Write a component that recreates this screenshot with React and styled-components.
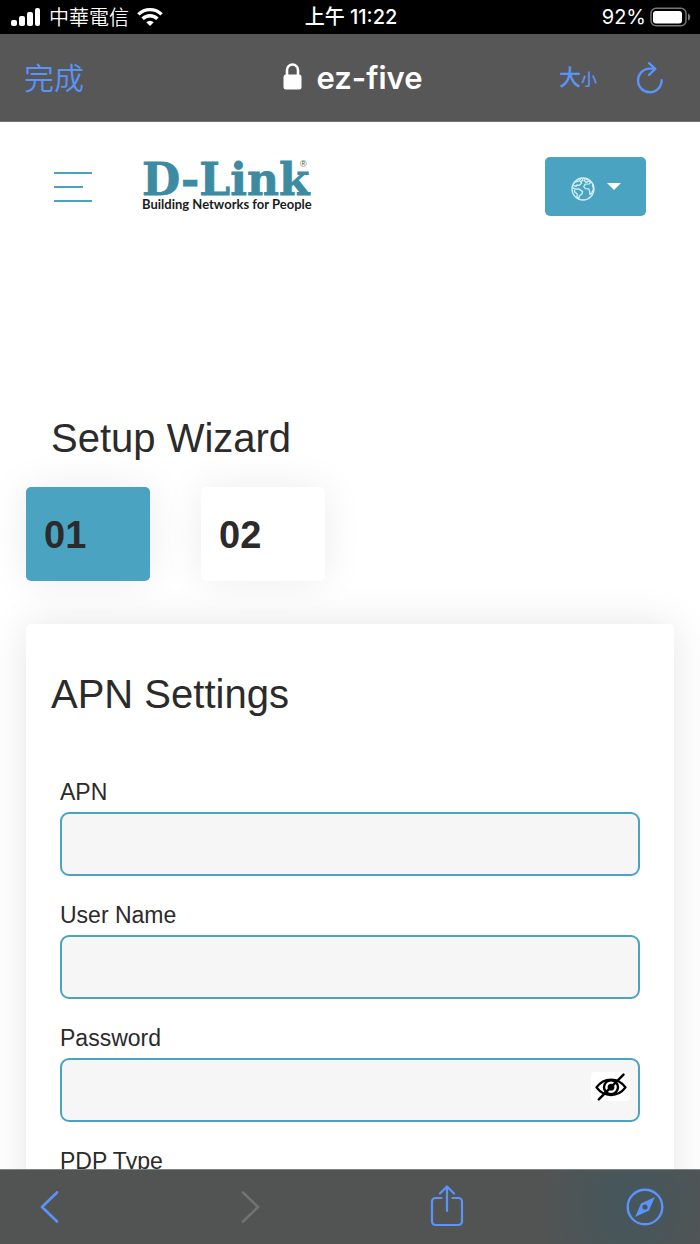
import { useState } from "react";
import styled, { createGlobalStyle, css } from "styled-components";

const teal = "#4aa3c1";
const iosBlue = "#5a93fa";
const ink = "#2b2b2b";

const GlobalStyle = createGlobalStyle`
  * {
    box-sizing: border-box;
  }
  body {
    margin: 0;
    background: #fff;
    color: ${ink};
    font-family: "Liberation Sans", Arial, sans-serif;
  }
  button {
    border: 0;
    padding: 0;
    background: none;
    font: inherit;
    cursor: pointer;
  }
`;

const Screen = styled.div`
  display: flex;
  flex-direction: column;
  height: 100vh;
  overflow: hidden;
`;

const StatusBar = styled.div`
  display: grid;
  grid-template-columns: 1fr auto 1fr;
  align-items: center;
  flex-shrink: 0;
  height: 34px;
  padding: 0 9px 0 11px;
  background: #000;
  color: #fff;
  font: 400 20px/34px Inter, "Noto Sans CJK TC", sans-serif;
`;

const StatusGroup = styled.div`
  display: flex;
  align-items: center;
  gap: ${props => props.gap || "8px"};
  ${props => props.end && css`
    justify-content: flex-end;
  `}
`;

const Carrier = styled.span`
  font-family: "Noto Sans CJK TC", sans-serif;
  font-weight: 350;
`;

const Clock = styled.span`
  font-weight: 500;
`;

const AddressBar = styled.div`
  display: grid;
  grid-template-columns: 1fr auto 1fr;
  align-items: center;
  flex-shrink: 0;
  height: 88px;
  padding: 0 18px 0 24px;
  background: #575757;
  border-bottom: 1px solid #727272;
  font-family: Inter, "Noto Sans CJK TC", sans-serif;
`;

const DoneButton = styled.button`
  justify-self: start;
  color: ${iosBlue};
  font-size: 30px;
  font-weight: 350;
  line-height: 40px;
`;

const Site = styled.div`
  display: flex;
  align-items: center;
  gap: 14px;
  color: #fff;
  font-size: 31px;
  font-weight: 600;
  line-height: 40px;
`;

const AddressActions = styled.div`
  display: flex;
  align-items: center;
  justify-content: flex-end;
  gap: 39px;
  padding-right: 18px;
  color: ${iosBlue};
`;

const TextSizeButton = styled.button`
  display: flex;
  align-items: baseline;
  color: inherit;
  font-size: 22px;
  font-weight: 500;
  line-height: 30px;

  small {
    font-size: 16px;
  }
`;

const IconButton = styled.button`
  display: flex;
  align-items: center;
  justify-content: center;
  color: inherit;
`;

const Page = styled.main`
  flex: 1;
  min-height: 0;
  overflow: hidden;
`;

const Header = styled.header`
  display: flex;
  align-items: flex-start;
  padding: 35px 54px 0;
`;

const MenuButton = styled.button`
  display: flex;
  flex-direction: column;
  gap: 12px;
  width: 38px;
  margin: 15px 50px 0 0;
`;

const MenuLine = styled.span`
  width: ${props => (props.short ? "29px" : "38px")};
  height: 2px;
  background: ${teal};
`;

const LanguageButton = styled.button`
  display: flex;
  align-items: center;
  justify-content: center;
  gap: 12px;
  width: 101px;
  height: 59px;
  margin-left: auto;
  border-radius: 5px;
  background: ${teal};
  color: #fff;
`;

const Title = styled.h1`
  margin: 0;
  padding: 0 51px;
  font-size: 40px;
  font-weight: 400;
  line-height: 48px;
`;

const Wizard = styled.section`
  padding-top: 198px;
`;

const Steps = styled.ol`
  display: flex;
  gap: 51px;
  margin: 25px 0 43px;
  padding: 0 26px;
  list-style: none;
`;

const Step = styled.li`
  width: 124px;
  height: 94px;
  padding: 0 18px;
  border-radius: 5px;
  background: ${props => (props.active ? teal : "#fff")};
  box-shadow: 0 0 40px rgba(0, 0, 0, 0.08);
  font-size: 38px;
  font-weight: 700;
  line-height: 96px;
`;

const Panel = styled.form`
  margin: 0 26px;
  padding: 46px 34px 40px;
  border-radius: 5px;
  background: #fff;
  box-shadow: 0 0 40px rgba(0, 0, 0, 0.1);
`;

const PanelTitle = styled.h2`
  margin: 0 0 57px -9px;
  font-size: 40px;
  font-weight: 400;
  line-height: 48px;
`;

const Field = styled.div`
  margin-bottom: 22px;
`;

const Label = styled.label`
  display: block;
  margin-bottom: 2px;
  font-size: 23px;
  line-height: 35px;
`;

const control = css`
  display: block;
  width: 100%;
  height: 64px;
  padding: 0 16px;
  border: 2px solid ${teal};
  border-radius: 9px;
  outline: 0;
  background: #f6f6f6;
  color: ${ink};
  font: 23px "Liberation Sans", Arial, sans-serif;
`;

const Input = styled.input`
  ${control}
`;

const Select = styled.select`
  ${control}
`;

const PasswordBox = styled.div`
  position: relative;
`;

const RevealButton = styled.button`
  position: absolute;
  top: 14px;
  right: 10px;
  display: flex;
  align-items: center;
  justify-content: center;
  width: 39px;
  height: 29px;
  border-radius: 4px;
  background: #fff;
  color: #000;
`;

const Toolbar = styled.nav`
  display: flex;
  align-items: center;
  justify-content: space-between;
  flex-shrink: 0;
  height: 75px;
  padding: 0 35px 0 31px;
  border-top: 1px solid #7c8583;
  background:
    radial-gradient(ellipse 90px 110px at 90% 45%, #44575d, transparent),
    #525453;
  color: ${iosBlue};
`;

const ToolButton = styled.button`
  display: flex;
  align-items: center;
  justify-content: center;
  width: 40px;
  height: 44px;
  color: ${props => (props.disabled ? "#717272" : "inherit")};
`;

const SignalIcon = () => (
  <svg width="30" height="20" viewBox="0 0 30 20" fill="#fff">
    <rect x="0" y="13" width="6" height="6" rx="2" />
    <rect x="8" y="9" width="6" height="10" rx="2" />
    <rect x="16" y="5" width="6" height="14" rx="2" />
    <rect x="24" y="1" width="5" height="18" rx="2" />
  </svg>
);

const WifiIcon = () => (
  <svg width="26" height="20" viewBox="0 0 26 20" fill="none" stroke="#fff" strokeWidth="3.4">
    <path d="M1.4 7.4a16.4 16.4 0 0 1 23.2 0" />
    <path d="M5.6 11.8a10.4 10.4 0 0 1 14.8 0" />
    <path d="M9.3 15.3a5.3 5.3 0 0 1 7.4 0L13 19Z" fill="#fff" stroke="none" />
  </svg>
);

const BatteryIcon = () => (
  <svg width="41" height="20" viewBox="0 0 41 20">
    <rect x="1" y="1.2" width="35" height="17.6" rx="5" fill="none" stroke="#777" strokeWidth="1.4" />
    <rect x="3" y="4" width="29" height="12.4" rx="3" fill="#fff" />
    <path d="M38 6.5c3 1 3 6 0 7Z" fill="#777" />
  </svg>
);

const LockIcon = () => (
  <svg width="19" height="29" viewBox="0 0 19 29">
    <path d="M4 12V7a5.5 5.5 0 0 1 11 0V12" fill="none" stroke="#fff" strokeWidth="2.6" />
    <rect x="0.5" y="11.5" width="18" height="15" rx="2.5" fill="#fff" />
  </svg>
);

const ReloadIcon = () => (
  <svg width="28" height="32" viewBox="0 0 28 32" fill="none" stroke="currentColor" strokeWidth="2.4" strokeLinecap="round" strokeLinejoin="round">
    <path d="M25.6 18.2A11.8 11.8 0 1 1 13.8 6.6H19" />
    <path d="M13 1.2 19.2 6.9 13 13" />
  </svg>
);

const Logo = () => (
  <svg width="172" height="56" viewBox="0 0 172 56" overflow="visible" role="img" aria-label="D-Link">
    <text
      x="0"
      y="38"
      fill="#3d8ba2"
      stroke="#3d8ba2"
      strokeWidth="0.8"
      fontFamily="'DejaVu Serif', serif"
      fontWeight="700"
      fontSize="44"
    >
      D-Link
    </text>
    <text x="158" y="10" fill="#555" fontFamily="'Liberation Sans', sans-serif" fontSize="9">®</text>
    <text x="0" y="52" fill="#1c1c1c" fontFamily="Lato, sans-serif" fontWeight="700" fontSize="13">
      Building Networks for People
    </text>
  </svg>
);

const GlobeIcon = () => (
  <svg width="24" height="28" viewBox="0 -4 24 28" fill="none" stroke="#d3edf5" strokeWidth="1.3" strokeLinejoin="round">
    <circle cx="12" cy="12" r="11" />
    <path d="M2.2 8.2 5 9.4 6 8l2.2.3 2.4-2.1-1-1.6L12 3.4 11.2 1.2" />
    <path d="M4 5.2 8.4 3.8 10 1.4" />
    <path d="M1.4 10.6 4.8 12.2l2.8-.4 4 2.8-.6 2.4-2.6 1.8-.6 3.2-1.8-2.2.2-2.8-2.4-2-.4-2.2" />
    <path d="M14.2 1.4 13.4 4l2 1.4 2.2-1.2 2 1.2-1.2 1.4-4.4.4-1.2 2.4 1.6 2 3.2.2 1 2.2.2 3.4 1.6-.8 2.2-4.6-1.2-3.6 1.2-1.2" />
    <path d="M15.2 2.4 17.6 3" />
  </svg>
);

const CaretIcon = () => (
  <svg width="14" height="7" viewBox="0 0 14 7" fill="#fff">
    <path d="M0 0h14L7 7Z" />
  </svg>
);

const EyeOffIcon = () => (
  <svg width="32" height="28" viewBox="0 0 32 28" fill="none" stroke="currentColor" strokeWidth="2.4" strokeLinecap="round" strokeLinejoin="round">
    <path d="M1.5 14.4C5.4 9 10.4 6.6 16 6.6s10.6 2.4 14.5 7.8C26.6 19.6 21.6 22 16 22S5.4 19.6 1.5 14.4Z" />
    <circle cx="16" cy="14.2" r="7" />
    <circle cx="16" cy="14.2" r="2.2" fill="currentColor" />
    <path d="M28.5 1.6 3.8 26.4" />
  </svg>
);

const ChevronIcon = ({ right }) => (
  <svg width="24" height="32" viewBox="0 0 24 32" fill="none" stroke="currentColor" strokeWidth="2.6" strokeLinecap="round" strokeLinejoin="round">
    <path d={right ? "M6 1.5 21 16 6 30.5" : "M18 1.5 3 16 18 30.5"} />
  </svg>
);

const ShareIcon = () => (
  <svg width="34" height="44" viewBox="0 0 34 44" fill="none" stroke="currentColor" strokeWidth="2.2" strokeLinecap="round" strokeLinejoin="round">
    <path d="M11.5 13H5.5A3.5 3.5 0 0 0 2 16.5v20A3.5 3.5 0 0 0 5.5 40h23a3.5 3.5 0 0 0 3.5-3.5v-20a3.5 3.5 0 0 0-3.5-3.5h-6" />
    <path d="M17 26V2M10 8.5l7-7 7 7" />
  </svg>
);

const CompassIcon = () => (
  <svg width="38" height="38" viewBox="0 0 38 38">
    <circle cx="19" cy="19" r="17.3" fill="none" stroke="currentColor" strokeWidth="2.4" />
    <path
      d="M28.9 9.1 23 22.4 9.1 28.9 15 15.6ZM19 16.4a2.6 2.6 0 1 0 0 5.2 2.6 2.6 0 0 0 0-5.2Z"
      fill="currentColor"
      fillRule="evenodd"
    />
  </svg>
);

const steps = ["01", "02"];

const SetupForm = () => {
  const [visible, setVisible] = useState(false);

  return (
    <Panel onSubmit={(e) => e.preventDefault()}>
      <PanelTitle>APN Settings</PanelTitle>
      <Field>
        <Label htmlFor="apn">APN</Label>
        <Input id="apn" type="text" />
      </Field>
      <Field>
        <Label htmlFor="username">User Name</Label>
        <Input id="username" type="text" />
      </Field>
      <Field>
        <Label htmlFor="password">Password</Label>
        <PasswordBox>
          <Input id="password" type={visible ? "text" : "password"} />
          <RevealButton type="button" aria-label="Show password" onClick={() => setVisible(!visible)}>
            <EyeOffIcon />
          </RevealButton>
        </PasswordBox>
      </Field>
      <Field>
        <Label htmlFor="pdp">PDP Type</Label>
        <Select id="pdp" />
      </Field>
    </Panel>
  );
};

const App = () => (
  <>
    <GlobalStyle />
    <Screen>
      <StatusBar>
        <StatusGroup>
          <SignalIcon />
          <Carrier>中華電信</Carrier>
          <WifiIcon />
        </StatusGroup>
        <Clock>上午 11:22</Clock>
        <StatusGroup end gap="4px">
          <span>92%</span>
          <BatteryIcon />
        </StatusGroup>
      </StatusBar>
      <AddressBar>
        <DoneButton>完成</DoneButton>
        <Site>
          <LockIcon />
          ez-five
        </Site>
        <AddressActions>
          <TextSizeButton>
            大<small>小</small>
          </TextSizeButton>
          <IconButton aria-label="Reload">
            <ReloadIcon />
          </IconButton>
        </AddressActions>
      </AddressBar>
      <Page>
        <Header>
          <MenuButton aria-label="Menu">
            <MenuLine />
            <MenuLine short />
            <MenuLine />
          </MenuButton>
          <Logo />
          <LanguageButton aria-label="Language">
            <GlobeIcon />
            <CaretIcon />
          </LanguageButton>
        </Header>
        <Wizard>
          <Title>Setup Wizard</Title>
          <Steps>
            {steps.map((step, index) => (
              <Step key={step} active={index === 0}>
                {step}
              </Step>
            ))}
          </Steps>
          <SetupForm />
        </Wizard>
      </Page>
      <Toolbar>
        <ToolButton aria-label="Back">
          <ChevronIcon />
        </ToolButton>
        <ToolButton aria-label="Forward" disabled>
          <ChevronIcon right />
        </ToolButton>
        <ToolButton aria-label="Share">
          <ShareIcon />
        </ToolButton>
        <ToolButton aria-label="Open in Safari">
          <CompassIcon />
        </ToolButton>
      </Toolbar>
    </Screen>
  </>
);

export default App;
